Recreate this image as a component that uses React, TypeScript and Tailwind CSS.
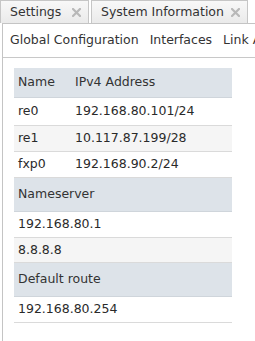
import React from 'react';

function CloseX() {
  return (
    <svg width="9" height="9" viewBox="0 0 9 9" className="shrink-0">
      <path d="M1 1 L8 8 M8 1 L1 8" stroke="#b8b8b8" strokeWidth="2.2" strokeLinecap="square" />
    </svg>
  );
}

function Tab({ label, width }: { label: string; width: string }) {
  return (
    <div
      className={`${width} h-[23px] flex items-center justify-between pl-[9px] pr-[7px] border border-b-0 border-[#c6c6c6] bg-gradient-to-b from-[#f8f8f8] to-[#eaeaea] text-[#333]`}
    >
      <span>{label}</span>
      <CloseX />
    </div>
  );
}

type Row = { kind: 'head' | 'row'; cells: string[]; h: string; alt?: boolean };

const rows: Row[] = [
  { kind: 'head', cells: ['Name', 'IPv4 Address'], h: 'h-[30px]' },
  { kind: 'row', cells: ['re0', '192.168.80.101/24'], h: 'h-[28px]' },
  { kind: 'row', cells: ['re1', '10.117.87.199/28'], h: 'h-[26px]', alt: true },
  { kind: 'row', cells: ['fxp0', '192.168.90.2/24'], h: 'h-[26px]' },
  { kind: 'head', cells: ['Nameserver'], h: 'h-[34px]' },
  { kind: 'row', cells: ['192.168.80.1'], h: 'h-[26px]' },
  { kind: 'row', cells: ['8.8.8.8'], h: 'h-[25px]', alt: true },
  { kind: 'head', cells: ['Default route'], h: 'h-[34px]' },
  { kind: 'row', cells: ['192.168.80.254'], h: 'h-[26px]' },
];

export default function App() {
  return (
    <div className="w-[255px] h-[341px] overflow-hidden bg-white text-[12.5px] text-[#2a2a2a] font-['DejaVu_Sans',Verdana,sans-serif] whitespace-nowrap">
      <div className="flex gap-[2px] h-[23px]">
        <Tab label="Settings" width="w-[89px]" />
        <Tab label="System Information" width="w-[157px]" />
      </div>
      <div className="ml-[2px] h-[318px] border-l border-t border-[#c4c4c4]">
        <div className="h-[34px] flex items-center gap-[11px] pl-[7px] border-b border-[#c8c8c8] text-[#333]">
          <span>Global Configuration</span>
          <span>Interfaces</span>
          <span>Link Aggregation</span>
        </div>
        <div className="mt-[10px] ml-[11px] w-[218px]">
          {rows.map((r, i) => (
            <div
              key={i}
              className={`${r.h} flex items-center pl-[4px] border-b ${
                r.kind === 'head' ? 'bg-[#dde3e9] border-[#cfd5db] text-[#333]' : r.alt ? 'bg-[#f5f5f5] border-[#dadada]' : 'bg-white border-[#dadada]'
              }`}
            >
              <span className={r.cells.length > 1 ? 'w-[57px]' : ''}>{r.cells[0]}</span>
              {r.cells[1] && <span>{r.cells[1]}</span>}
            </div>
          ))}
        </div>
      </div>
    </div>
  );
}
